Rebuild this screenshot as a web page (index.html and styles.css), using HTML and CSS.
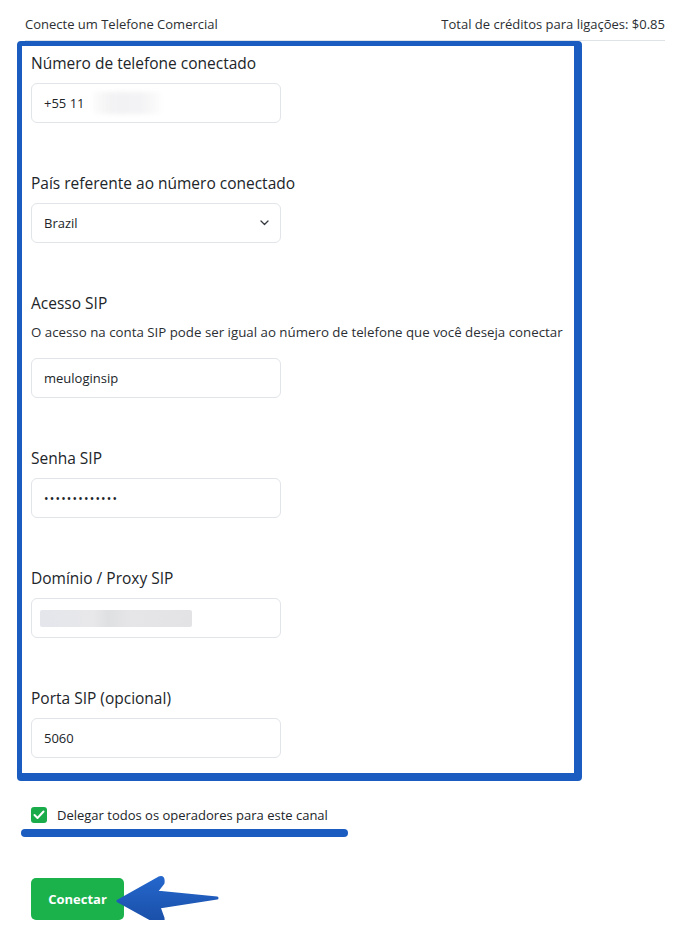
FILE: index.html
```html
<!DOCTYPE html>
<html lang="pt-BR">
<head>
<meta charset="utf-8">
<title>Conecte um Telefone Comercial</title>
<link rel="stylesheet" href="styles.css">
</head>
<body>
<div class="page">
  <header class="top">
    <span>Conecte um Telefone Comercial</span>
    <span>Total de créditos para ligações: $0.85</span>
  </header>

  <form class="box">
    <div class="group">
      <label class="lbl">Número de telefone conectado</label>
      <div class="field">
        <input class="inp" type="text" value="+55 11">
        <span class="blur blur-phone"></span>
      </div>
    </div>

    <div class="group">
      <label class="lbl">País referente ao número conectado</label>
      <div class="field select">
        <span>Brazil</span>
        <svg class="chev" width="9" height="6" viewBox="0 0 9 6"><path d="M1 1l3.5 3.5L8 1" fill="none" stroke="#343a40" stroke-width="1.3" stroke-linecap="round" stroke-linejoin="round"/></svg>
      </div>
    </div>

    <div class="group">
      <label class="lbl">Acesso SIP</label>
      <p class="help">O acesso na conta SIP pode ser igual ao número de telefone que você deseja conectar</p>
      <div class="field">
        <input class="inp" type="text" value="meuloginsip">
      </div>
    </div>

    <div class="group">
      <label class="lbl">Senha SIP</label>
      <div class="field">
        <div class="inp dots">•••••••••••••</div>
      </div>
    </div>

    <div class="group">
      <label class="lbl">Domínio / Proxy SIP</label>
      <div class="field">
        <input class="inp" type="text" value="">
        <span class="blur blur-domain"></span>
      </div>
    </div>

    <div class="group last">
      <label class="lbl">Porta SIP (opcional)</label>
      <div class="field">
        <input class="inp" type="text" value="5060">
      </div>
    </div>
  </form>

  <div class="check-row">
    <span class="checkbox">
      <svg width="12" height="10" viewBox="0 0 12 10"><path d="M1.5 5l3 3 6-6.5" fill="none" stroke="#fff" stroke-width="2" stroke-linecap="round" stroke-linejoin="round"/></svg>
    </span>
    <span>Delegar todos os operadores para este canal</span>
  </div>
  <div class="underline"></div>

  <div class="actions">
    <button class="btn" type="button">Conectar</button>
    <svg class="arrow" width="115" height="60" viewBox="0 0 115 60">
      <defs>
        <linearGradient id="ag" x1="0" y1="0" x2="0" y2="1">
          <stop offset="0" stop-color="#2466cc"/>
          <stop offset="1" stop-color="#1a4fa6"/>
        </linearGradient>
      </defs>
      <path d="M9 30 L50 7 Q55 5 54 12 L47 21 L108 27 L50 36 L54 47 Q55 55 49 52 Z" fill="url(#ag)" stroke="url(#ag)" stroke-width="3" stroke-linejoin="round"/>
    </svg>
  </div>
</div>
</body>
</html>
```

FILE: styles.css
```css
* { box-sizing: border-box; }
html, body { margin: 0; padding: 0; background: #fff; }
body {
  font-family: "Open Sans", "Noto Sans", sans-serif;
  color: #212529;
}
.page {
  padding: 0 30px 0 25px;
}
.top {
  display: flex;
  justify-content: space-between;
  font-size: 13px;
  line-height: 18px;
  padding: 15px 0 7px;
  border-bottom: 1px solid #dfe2e6;
  color: #2b2f33;
}
.box {
  margin: 0 0 0 -8px;
  width: 565px;
  border-style: solid;
  border-color: #1b5cc0;
  border-width: 5px 8px 8px 5px;
  border-radius: 4px;
  padding: 7px 9px 15px 9px;
  background: #fff;
}
.group { margin-bottom: 50px; }
.group.last { margin-bottom: 0; }
.lbl {
  display: block;
  font-size: 15.5px;
  font-weight: 500;
  line-height: 20px;
  margin-bottom: 10px;
  color: #212529;
}
.help {
  margin: 5px 0 17px;
  font-size: 13.3px;
  line-height: 18px;
  color: #2b2f33;
}
.field {
  position: relative;
  width: 250px;
  height: 40px;
}
.inp {
  width: 250px;
  height: 40px;
  border: 1px solid #e1e4e8;
  border-radius: 6px;
  padding: 0 12px;
  font-family: inherit;
  font-size: 13px;
  color: #212529;
  background: #fff;
  outline: none;
}
.dots {
  display: flex;
  align-items: center;
  letter-spacing: 1.2px;
  font-size: 12px;
}
.select {
  border: 1px solid #e1e4e8;
  border-radius: 6px;
  padding: 0 11px 0 12px;
  display: flex;
  align-items: center;
  justify-content: space-between;
  font-size: 13px;
}
.blur {
  position: absolute;
  border-radius: 2px;
}
.blur-phone {
  left: 62px;
  top: 9px;
  width: 68px;
  height: 22px;
  background: linear-gradient(90deg, rgba(243,243,245,0.3), #f2f2f4 30%, #f3f3f5 70%, rgba(243,243,245,0.2));
  filter: blur(2px);
}
.blur-domain {
  left: 9px;
  top: 12px;
  width: 152px;
  height: 17px;
  background: linear-gradient(90deg, #e4e6ec 0%, #e8e8ea 35%, #dfe0e2 45%, #e6e6e8 60%, #e3e3e5 100%);
}
.check-row {
  display: flex;
  align-items: center;
  gap: 10px;
  margin: 25px 0 0 6px;
  font-size: 13px;
  line-height: 18px;
  color: #212529;
}
.checkbox {
  width: 16px;
  height: 16px;
  border-radius: 3px;
  background: #1aab4b;
  display: flex;
  align-items: center;
  justify-content: center;
}
.underline {
  margin: 5px 0 0 -4px;
  width: 327px;
  height: 8px;
  border-radius: 4px;
  background: #1b5cc0;
}
.actions {
  position: relative;
  margin: 41px 0 0 6px;
  height: 42px;
}
.btn {
  width: 93px;
  height: 42px;
  border: none;
  border-radius: 5px;
  background: #1bb24b;
  color: #fff;
  font-family: inherit;
  font-size: 13px;
  font-weight: 700;
}
.arrow {
  position: absolute;
  left: 78px;
  top: -7px;
}
```
